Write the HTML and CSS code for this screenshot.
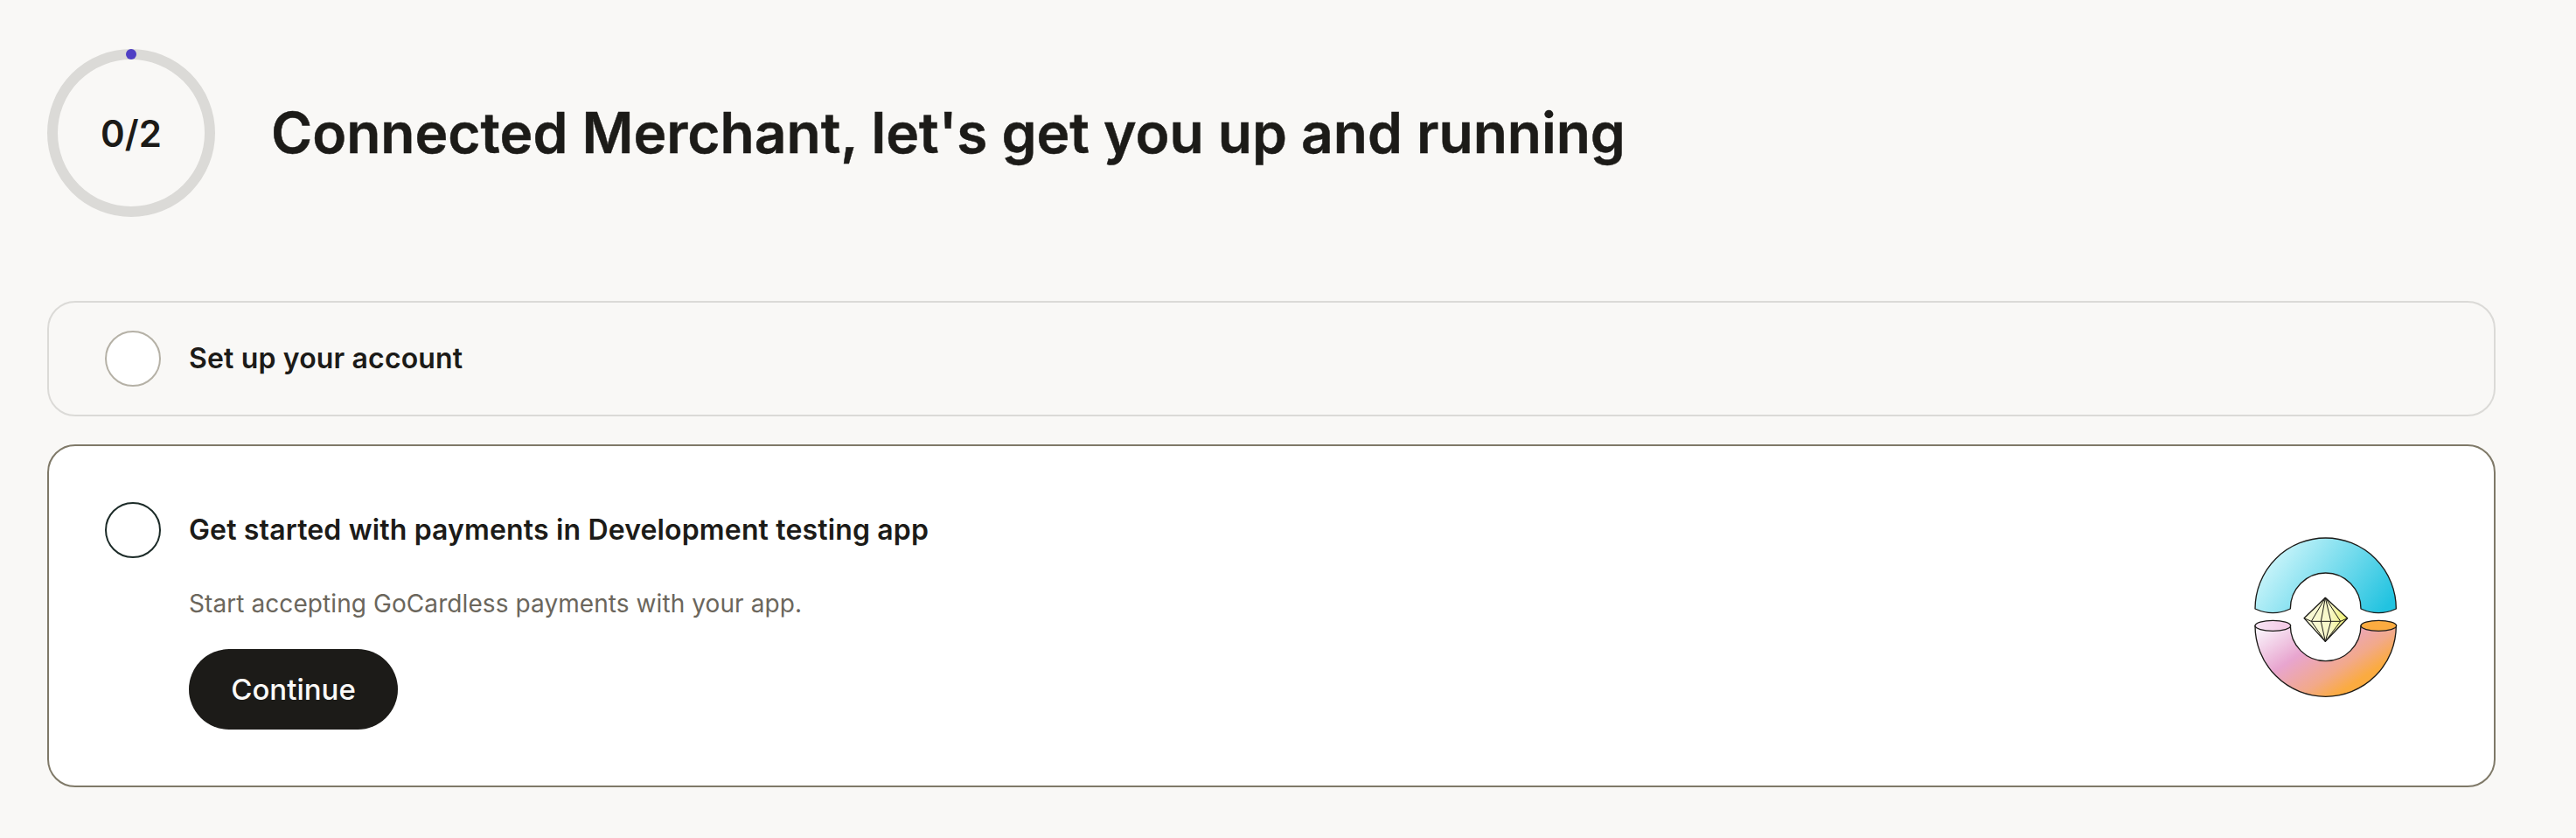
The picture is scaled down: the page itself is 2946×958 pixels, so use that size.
FILE: index.html
```html
<!DOCTYPE html>
<html lang="en">
<head>
<meta charset="utf-8">
<title>Onboarding</title>
<link rel="stylesheet" href="styles.css">
</head>
<body>
<main class="page">
  <header class="header">
    <div class="ring"><span class="ring-dot"></span><span class="ring-label">0/2</span></div>
    <h1 class="title">Connected Merchant, let's get you up and running</h1>
  </header>
  <section class="card card-muted">
    <span class="check check-muted"></span>
    <h2 class="card-title">Set up your account</h2>
  </section>
  <section class="card card-active">
    <div class="card-main">
      <div class="card-head">
        <span class="check check-active"></span>
        <h2 class="card-title">Get started with payments in Development testing app</h2>
      </div>
      <div class="card-body">
        <p class="desc">Start accepting GoCardless payments with your app.</p>
        <button class="btn" type="button">Continue</button>
      </div>
    </div>
    <svg class="art" viewBox="0 0 720 720" width="240" height="240" aria-hidden="true">
      <defs>
        <linearGradient id="gTop" gradientUnits="userSpaceOnUse" x1="190" y1="90" x2="540" y2="350">
          <stop offset="0" stop-color="#cff6fb"/>
          <stop offset="1" stop-color="#22c3e0"/>
        </linearGradient>
        <linearGradient id="gBot" gradientUnits="userSpaceOnUse" x1="150" y1="380" x2="350" y2="680">
          <stop offset="0" stop-color="#f9f1fa"/>
          <stop offset="0.4" stop-color="#e8a5cf"/>
          <stop offset="0.72" stop-color="#f2a98a"/>
          <stop offset="0.92" stop-color="#fbab40"/>
        </linearGradient>
        <linearGradient id="gPink" x1="0" y1="0" x2="1" y2="0">
          <stop offset="0" stop-color="#f8e6f4"/>
          <stop offset="1" stop-color="#f3c6e4"/>
        </linearGradient>
        <linearGradient id="gGem" x1="0" y1="0" x2="1" y2="0">
          <stop offset="0" stop-color="#f9f9d8"/>
          <stop offset="0.6" stop-color="#f8f8c8"/>
          <stop offset="1" stop-color="#eef06a"/>
        </linearGradient>
      </defs>
      <g stroke="#1c1b18" stroke-width="4" stroke-linejoin="round">
        <path fill="url(#gTop)" d="M117 318 A242 243 0 0 1 601 318 Q540 346 480 318 A121 123 0 0 0 238 318 Q178 346 117 318 Z"/>
        <path fill="url(#gBot)" d="M117 376 A242 243 0 0 0 601 376 L480 376 A121 121 0 0 1 238 376 Z"/>
        <ellipse cx="178" cy="376" rx="61" ry="18" fill="url(#gPink)"/>
        <ellipse cx="541" cy="376" rx="61" ry="18" fill="#fbab40"/>
        <path fill="url(#gGem)" d="M358 280 L434 350 L358 430 L285 350 Z"/>
      </g>
      <g stroke="#1c1b18" stroke-width="3" fill="none" stroke-linejoin="round">
        <path d="M285 350 L310 361 L410 361 L434 350"/>
        <path d="M358 280 L310 361 L358 430 M358 280 L343 361 L358 430 M358 280 L377 361 L358 430 M358 280 L410 361 L358 430"/>
      </g>
    </svg>
  </section>
</main>
</body>
</html>
```
FILE: styles.css
```css
* { box-sizing: border-box; }
html, body { margin: 0; padding: 0; }
body {
  background: #f9f8f6;
  color: #1c1b18;
  font-family: Inter, "Liberation Sans", sans-serif;
}
.page { padding: 56px 92px 0 54px; }
.header {
  display: flex;
  align-items: center;
  gap: 64px;
  margin-bottom: 96px;
}
.ring {
  position: relative;
  flex: none;
  width: 192px;
  height: 192px;
  border: 12px solid #dbdad7;
  border-radius: 50%;
  display: flex;
  align-items: center;
  justify-content: center;
}
.ring-dot {
  position: absolute;
  top: -12px;
  left: 50%;
  width: 12px;
  height: 12px;
  margin-left: -6px;
  border-radius: 50%;
  background: #4f3fc4;
}
.ring-label { font-size: 42px; font-weight: 600; }
.title {
  margin: 0;
  font-size: 64px;
  line-height: 80px;
  font-weight: 600;
  -webkit-text-stroke: 0.5px #1c1b18;
}
.card {
  border-radius: 32px;
  border: 2px solid #dbdad7;
}
.card-muted {
  height: 132px;
  display: flex;
  align-items: center;
  gap: 32px;
  padding-left: 64px;
  margin-bottom: 32px;
}
.card-active {
  height: 392px;
  background: #fff;
  border-color: #7f7968;
  display: flex;
  justify-content: space-between;
  padding: 64px 72px 0 64px;
}
.card-head { display: flex; align-items: center; gap: 32px; }
.check {
  flex: none;
  width: 64px;
  height: 64px;
  border-radius: 50%;
  background: #fff;
  border: 2px solid #b5b1a6;
}
.check-active { border-color: #1c2b28; }
.card-title {
  margin: 0;
  font-size: 32px;
  line-height: 40px;
  font-weight: 600;
  letter-spacing: 0.15px;
}
.card-body { padding-left: 96px; }
.desc {
  margin: 32px 0;
  font-size: 28px;
  line-height: 40px;
  letter-spacing: 0.08px;
  color: #6b665c;
}
.btn {
  display: block;
  width: 239px;
  height: 92px;
  border: 0;
  border-radius: 46px;
  background: #1c1b18;
  color: #fbfaf8;
  font: 500 33px Inter, "Liberation Sans", sans-serif;
}
.art { flex: none; margin-top: 16px; }
```
